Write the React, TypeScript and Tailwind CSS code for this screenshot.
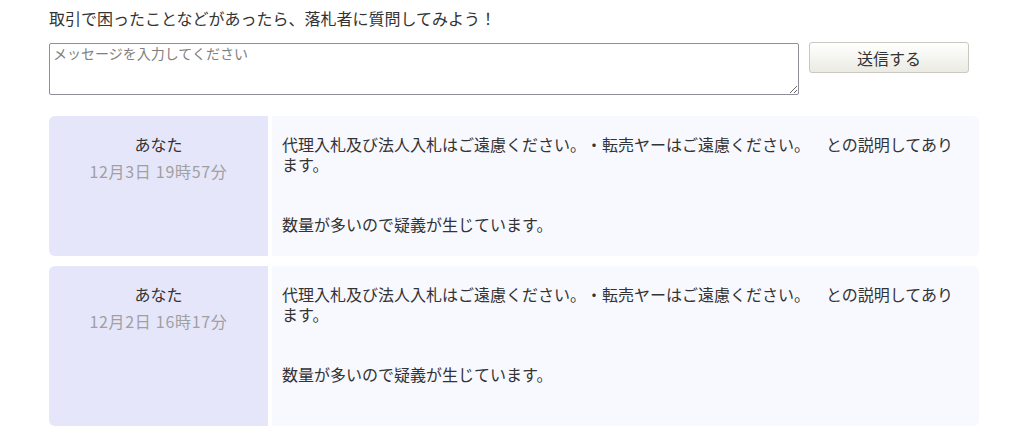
type Message = {
    author: string;
    date: string;
    lines: string[];
};

const messages: Message[] = [
    {
        author: "あなた",
        date: "12月3日 19時57分",
        lines: [
            "代理入札及び法人入札はご遠慮ください。・転売ヤーはご遠慮ください。　との説明してあります。",
            "",
            "",
            "数量が多いので疑義が生じています。",
        ],
    },
    {
        author: "あなた",
        date: "12月2日 16時17分",
        lines: [
            "代理入札及び法人入札はご遠慮ください。・転売ヤーはご遠慮ください。　との説明してあります。",
            "",
            "",
            "数量が多いので疑義が生じています。",
            "",
        ],
    },
];

function MessageCard({ message }: { message: Message }) {
    return (
        <div className="flex gap-[4px]">
            <div className="w-[219px] shrink-0 rounded-l-md bg-[#e6e6fa] pt-[18px] text-center">
                <p className="leading-5 text-[#333]">{message.author}</p>
                <p className="mt-[7px] leading-5 tracking-[0.7px] text-[#a0a0a0]">{message.date}</p>
            </div>
            <div className="flex-1 rounded-r-md bg-[#f8f8ff] pl-[10px] pr-[16px] pt-[18px] pb-[22px] text-[#333]">
                {message.lines.map((line, i) => (
                    <p key={i} className="min-h-5 leading-5">
                        {line}
                    </p>
                ))}
            </div>
        </div>
    );
}

export default function App() {
    return (
        <div
            className="w-[1026px] min-h-[439px] bg-white pl-[49px] pt-[8px] text-[16px] [text-spacing-trim:space-all]"
            style={{ fontFamily: '"Noto Sans CJK JP", "Noto Sans", sans-serif' }}
        >
            <div className="w-[930px]">
                <p className="leading-5 text-[#333]">取引で困ったことなどがあったら、落札者に質問してみよう！</p>

                <div className="mt-[14px] flex items-start gap-[10px]">
                    <textarea
                        placeholder="メッセージを入力してください"
                        className="mt-px h-[52px] w-[750px] rounded-[2px] border border-[#8e8e9a] px-[3px] py-[1px] text-[14px] leading-[17px] text-[#333] placeholder:text-[#808080] outline-none [text-spacing-trim:space-all]"
                    />
                    <button className="h-[31px] w-[160px] rounded-[3px] border border-[#c9c9c2] bg-linear-to-b from-white to-[#ebebe3] text-[16px] text-[#333]">
                        送信する
                    </button>
                </div>

                <div className="mt-[21px] flex flex-col gap-[10px]">
                    {messages.map((m, i) => (
                        <MessageCard key={i} message={m} />
                    ))}
                </div>
            </div>
        </div>
    );
}
